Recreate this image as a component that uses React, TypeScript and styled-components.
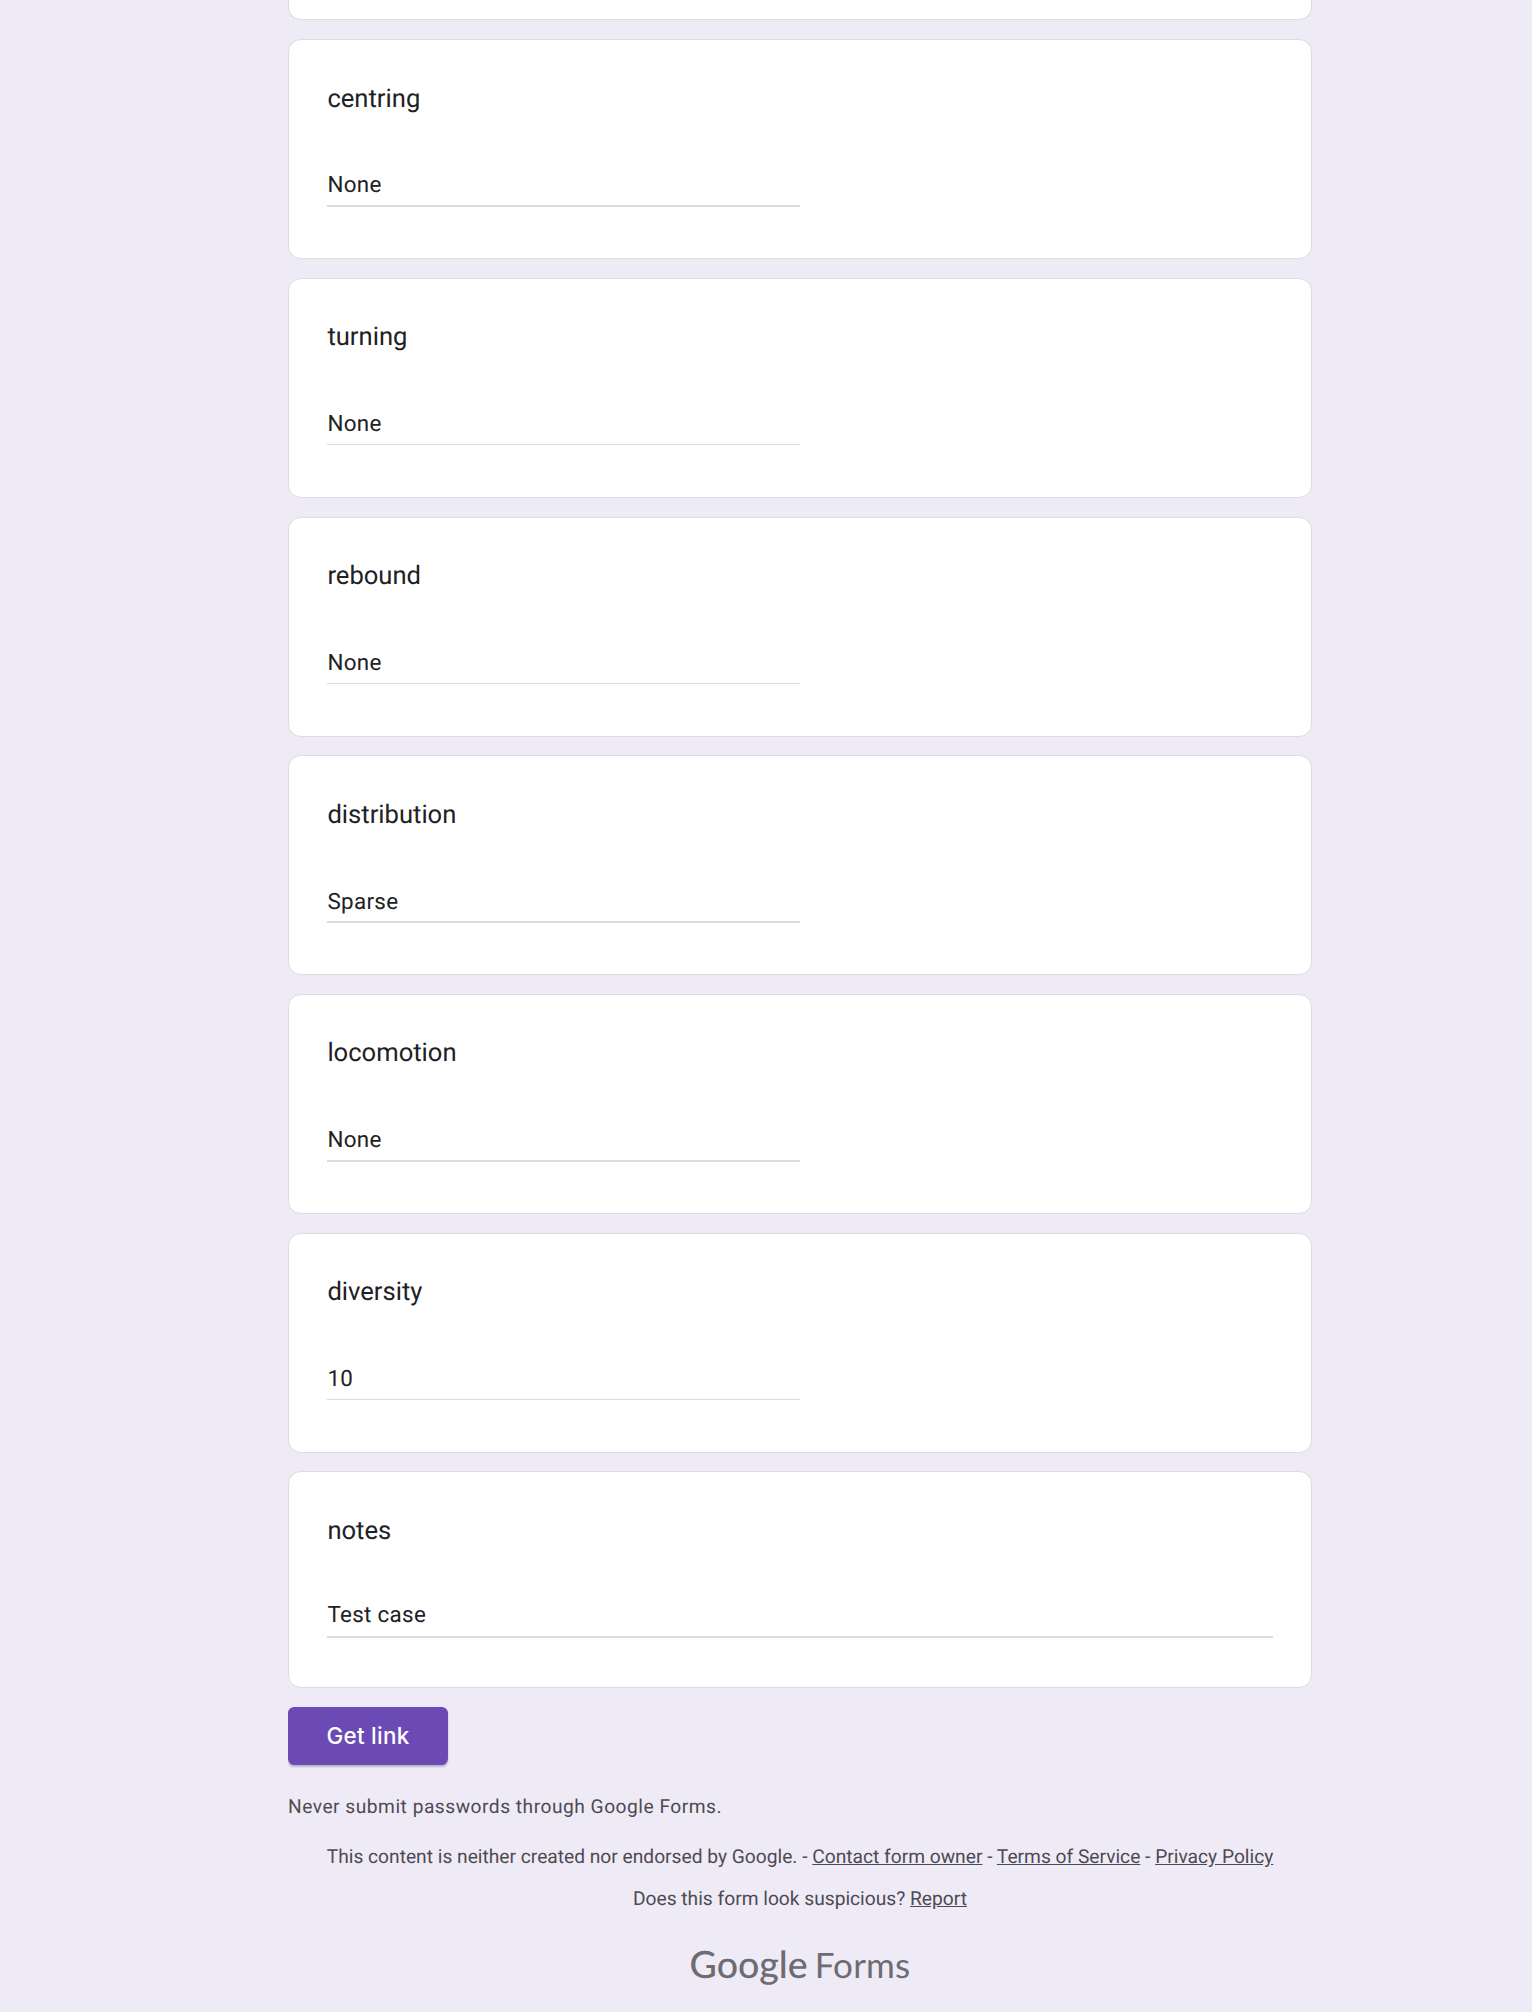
import { createGlobalStyle } from 'styled-components';
import styled from 'styled-components';

const GlobalStyle = createGlobalStyle`
  html, body {
    margin: 0;
    padding: 0;
    background: #efebf6;
    font-family: Roboto, "Liberation Sans", sans-serif;
    text-rendering: geometricPrecision;
  }
`;

const questions = [
  { title: 'centring', value: 'None' },
  { title: 'turning', value: 'None' },
  { title: 'rebound', value: 'None' },
  { title: 'distribution', value: 'Sparse' },
  { title: 'locomotion', value: 'None' },
  { title: 'diversity', value: '10' },
];

function App() {
  return (
    <>
      <GlobalStyle />
      <Page>
        <CutOffCard />
        {questions.map(q => (
          <Card key={q.title}>
            <Title>{q.title}</Title>
            <Answer>
              <AnswerText>{q.value}</AnswerText>
              <Underline />
            </Answer>
          </Card>
        ))}
        <Card $wide>
          <Title>notes</Title>
          <Answer $wide>
            <AnswerText>Test case</AnswerText>
            <Underline $wide />
          </Answer>
        </Card>
        <GetLink type="button">Get link</GetLink>
        <Warning>Never submit passwords through Google Forms.</Warning>
        <Legal $first>
          This content is neither created nor endorsed by Google. - <FootLink>Contact form owner</FootLink> -{' '}
          <FootLink>Terms of Service</FootLink> - <FootLink>Privacy Policy</FootLink>
        </Legal>
        <Legal>
          Does this form look suspicious? <FootLink>Report</FootLink>
        </Legal>
        <Logo>
          <LogoGoogle>Google</LogoGoogle>
          <LogoForms>Forms</LogoForms>
        </Logo>
      </Page>
    </>
  );
}

const Page = styled.div`
  box-sizing: border-box;
  width: 1024px;
  height: 2012px;
  margin-left: 288px;
  display: flex;
  flex-direction: column;
  overflow: hidden;
`;

const CutOffCard = styled.div`
  box-sizing: border-box;
  height: 20px;
  margin-bottom: 0.6px;
  flex: none;
  background: #fff;
  border: 1.6px solid #dadce0;
  border-top: 0;
  border-radius: 0 0 12.8px 12.8px;
`;

const Card = styled.section<{ $wide?: boolean }>`
  box-sizing: border-box;
  flex: none;
  height: ${p => (p.$wide ? '216.5px' : '220px')};
  margin-top: ${p => (p.$wide ? '18.6px' : '18.7px')};
  padding: 39.45px 38.4px 38.4px;
  background: #fff;
  border: 1.6px solid #dadce0;
  border-radius: 12.8px;
`;

const Title = styled.div`
  font-size: 25.6px;
  line-height: 38.4px;
  color: #202124;
`;

const Answer = styled.div<{ $wide?: boolean }>`
  width: ${p => (p.$wide ? '100%' : '50%')};
  margin-top: ${p => (p.$wide ? '48.75px' : '51.35px')};
`;

const AnswerText = styled.div`
  font-size: 22.4px;
  line-height: 33.6px;
  color: #202124;
  letter-spacing: 0.32px;
`;

const Underline = styled.div<{ $wide?: boolean }>`
  height: 1.6px;
  margin-top: ${p => (p.$wide ? '3.5px' : '2.13px')};
  background: #dcdcdf;
`;

const GetLink = styled.button`
  flex: none;
  align-self: flex-start;
  width: 160px;
  height: 57.6px;
  margin-top: 19.2px;
  padding: 0;
  border: 0;
  border-radius: 6.4px;
  background: #6b4ab5;
  color: #fff;
  font-family: Inter, Roboto, sans-serif;
  font-size: 22.4px;
  font-weight: 500;
  letter-spacing: 0.3px;
  box-shadow: 0 1.6px 2px rgba(60, 64, 67, 0.3);
`;

const Warning = styled.div`
  margin-top: 28px;
  font-size: 19.2px;
  line-height: 28.8px;
  letter-spacing: 0.5px;
  color: #4d4a52;
`;

const Legal = styled.div<{ $first?: boolean }>`
  margin-top: ${p => (p.$first ? '22px' : '13px')};
  text-align: center;
  font-size: 19.2px;
  line-height: 28.8px;
  color: #4d4a52;
`;

const FootLink = styled.a`
  color: #4d4a52;
  text-decoration: underline;
`;

const Logo = styled.div`
  margin-top: 27px;
  display: flex;
  justify-content: center;
  align-items: baseline;
  gap: 7px;
  color: #6d6c72;
`;

const LogoGoogle = styled.span`
  font-family: Lato, sans-serif;
  font-size: 37.5px;
  font-weight: 500;
`;

const LogoForms = styled.span`
  font-family: Lato, sans-serif;
  font-size: 35px;
  font-weight: 400;
  letter-spacing: 0.2px;
`;

export default App;
